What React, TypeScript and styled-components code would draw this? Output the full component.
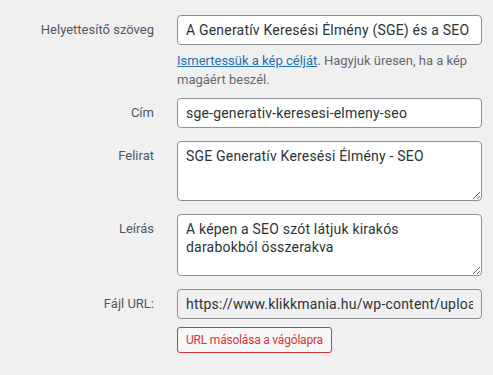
import React from 'react';
import styled, { createGlobalStyle } from 'styled-components';

const GlobalStyle = createGlobalStyle`
	html, body {
		margin: 0;
		padding: 0;
		background: #f0f0f1;
	}
	body {
		font-family: Roboto, "Noto Sans", "Liberation Sans", sans-serif;
		color: #1d2327;
	}
`;

const Settings = styled.div`
	display: grid;
	grid-template-columns: 154px 305px;
	column-gap: 23px;
	row-gap: 13px;
	padding-top: 15px;
	align-items: start;
`;

const Label = styled.label`
	font-size: 13px;
	line-height: 30px;
	color: #50575e;
	text-align: right;
	white-space: nowrap;
`;

const Field = styled.div`
	display: flex;
	flex-direction: column;
	align-items: flex-start;
`;

const TextInput = styled.input<{ $readOnly?: boolean }>`
	box-sizing: border-box;
	width: 305px;
	height: 30px;
	margin: 0;
	padding: 0 8px;
	font-family: inherit;
	font-size: 14px;
	letter-spacing: 0.2px;
	color: #2c3338;
	background: ${p => (p.$readOnly ? '#f0f0f1' : '#fff')};
	border: 1px solid #8c8f94;
	border-radius: 4px;
	outline: none;
`;

const TextArea = styled.textarea<{ $height: number }>`
	box-sizing: border-box;
	width: 305px;
	height: ${p => p.$height}px;
	margin: 0;
	padding: 5px 10px 5px 8px;
	font-family: inherit;
	font-size: 14px;
	letter-spacing: 0.2px;
	line-height: 18px;
	color: #2c3338;
	background: #fff;
	border: 1px solid #8c8f94;
	border-radius: 4px;
	outline: none;
`;

const Help = styled.p`
	margin: 6px 0 -4px;
	font-size: 13px;
	line-height: 19px;
	color: #646970;

	a {
		color: #2271b1;
		text-decoration: underline;
	}
`;

const CopyButton = styled.button`
	box-sizing: border-box;
	margin-top: 8px;
	height: 26px;
	padding: 0 8px;
	font-family: inherit;
	font-size: 12px;
	letter-spacing: -0.2px;
	color: #d63638;
	background: #f6f7f7;
	border: 1px solid #d63638;
	border-radius: 3px;
	cursor: pointer;
`;

const App: React.FC = () => {
	return (
		<>
			<GlobalStyle />
			<Settings>
				<Label>Helyettesítő szöveg</Label>
				<Field>
					<TextInput defaultValue='A Generatív Keresési Élmény (SGE) és a SEO' />
					<Help>
						<a href='#'>Ismertessük a kép célját</a>. Hagyjuk üresen, ha a kép
						magáért beszél.
					</Help>
				</Field>

				<Label>Cím</Label>
				<Field>
					<TextInput defaultValue='sge-generativ-keresesi-elmeny-seo' />
				</Field>

				<Label>Felirat</Label>
				<Field>
					<TextArea $height={60} defaultValue='SGE Generatív Keresési Élmény - SEO' />
				</Field>

				<Label>Leírás</Label>
				<Field>
					<TextArea
						$height={62}
						defaultValue='A képen a SEO szót látjuk kirakós darabokból összerakva'
					/>
				</Field>

				<Label>Fájl URL:</Label>
				<Field>
					<TextInput
						$readOnly
						readOnly
						defaultValue='https://www.klikkmania.hu/wp-content/uploads/2023/09/sge-generativ-keresesi-elmeny-seo.jpg'
					/>
					<CopyButton>URL másolása a vágólapra</CopyButton>
				</Field>
			</Settings>
		</>
	);
};

export default App;
